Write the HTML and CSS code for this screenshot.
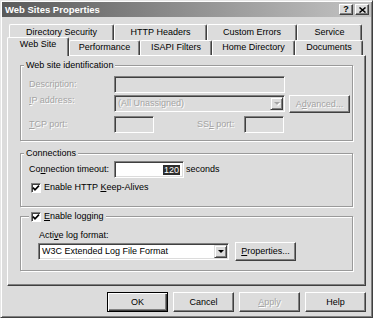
FILE: index.html
```html
<!DOCTYPE html>
<html>
<head>
<meta charset="utf-8">
<link rel="stylesheet" href="styles.css">
</head>
<body>
<div class="window">
  <div class="titlebar">
    <span class="title">Web Sites Properties</span>
    <div class="tbtns">
      <span class="tbtn help">?</span>
      <span class="tbtn"><svg width="7" height="6" viewBox="0 0 7 6"><path d="M0.5 0.5 L6.5 5.5 M6.5 0.5 L0.5 5.5" stroke="#000" stroke-width="1.5" fill="none"/></svg></span>
    </div>
  </div>
  <div class="content">
    <div class="tabs">
      <div class="tabrow back">
        <div class="tab t1">Directory Security</div>
        <div class="tab t2">HTTP Headers</div>
        <div class="tab t3">Custom Errors</div>
        <div class="tab t4">Service</div>
      </div>
      <div class="tabrow front">
        <div class="tab sel f1">Web Site</div>
        <div class="tab f2">Performance</div>
        <div class="tab f3">ISAPI Filters</div>
        <div class="tab f4">Home Directory</div>
        <div class="tab f5">Documents</div>
      </div>
    </div>
    <div class="panel">
      <div class="group g1">
        <div class="gtitle">Web site identification</div>
        <div class="row r1">
          <span class="lbl dis">Description:</span>
          <span class="field dis wide"></span>
        </div>
        <div class="row r2">
          <span class="lbl dis"><u>I</u>P address:</span>
          <span class="field dis wide combo"><span class="ctext distext">(All Unassigned)</span><span class="dd"><span class="arrow disarrow"></span></span></span>
          <span class="btn adv dis">A<u>d</u>vanced...</span>
        </div>
        <div class="row r3">
          <span class="lbl dis"><u>T</u>CP port:</span>
          <span class="field dis port"></span>
          <span class="lbl2 dis">SS<u>L</u> port:</span>
          <span class="field dis port"></span>
        </div>
      </div>
      <div class="group g2">
        <div class="gtitle">Connections</div>
        <div class="row r4">
          <span class="lbl">Co<u>n</u>nection timeout:</span>
          <span class="field tfield"><span class="selected">120</span></span>
          <span class="after">seconds</span>
        </div>
        <div class="row r5">
          <span class="cb"><svg width="8" height="8" viewBox="0 0 8 8"><path d="M1 3.6 L3 5.8 L7 1.6" stroke="#000" stroke-width="1.6" fill="none"/></svg></span>
          <span>Enable HTTP <u>K</u>eep-Alives</span>
        </div>
      </div>
      <div class="group g3">
        <div class="gtitle">
          <span class="cb"><svg width="8" height="8" viewBox="0 0 8 8"><path d="M1 3.6 L3 5.8 L7 1.6" stroke="#000" stroke-width="1.6" fill="none"/></svg></span>
          <span><u>E</u>nable logging</span>
        </div>
        <div class="row r6"><span class="lbl3">Acti<u>v</u>e log format:</span></div>
        <div class="row r7">
          <span class="field combo logfmt"><span class="ctext">W3C Extended Log File Format</span><span class="dd"><span class="arrow"></span></span></span>
          <span class="btn props"><u>P</u>roperties...</span>
        </div>
      </div>
    </div>
    <div class="buttons">
      <span class="btn dbtn default">OK</span>
      <span class="btn dbtn">Cancel</span>
      <span class="btn dbtn dis"><u>A</u>pply</span>
      <span class="btn dbtn">Help</span>
    </div>
  </div>
</div>
</body>
</html>
```
FILE: styles.css
```css
* { box-sizing: border-box; }
html, body { margin: 0; padding: 0; }
body {
  background: #dcdcdc;
  font-family: "Liberation Sans", Arial, sans-serif;
  font-size: 9px;
  color: #000;
}
u { text-decoration: underline; text-underline-offset: 1px; }

.window {
  width: 373px;
  height: 318px;
  border: 1px solid;
  border-color: #e6e6e6 #404040 #404040 #e6e6e6;
  box-shadow: inset 1px 1px #fff, inset -1px -1px #808080;
  padding: 1px;
  background: #dcdcdc;
  overflow: hidden;
}

.titlebar {
  height: 15px;
  background: linear-gradient(to right, #5a5a5a, #c4c4c4);
  display: flex;
  align-items: center;
  justify-content: space-between;
  padding: 0 2px 0 3px;
}
.title { color: #fff; font-weight: bold; font-size: 9.5px; }
.tbtns { display: flex; gap: 2px; }
.tbtn {
  width: 14px;
  height: 11px;
  background: #dcdcdc;
  border: 1px solid;
  border-color: #fff #404040 #404040 #fff;
  box-shadow: inset -1px -1px #808080;
  display: flex;
  align-items: center;
  justify-content: center;
  font-weight: bold;
  font-size: 9px;
  line-height: 1;
}

.content { padding: 0 5px; }
.tabs { margin-top: 7px; }
.tabrow { display: flex; }
.tabrow.back { margin-left: 2px; height: 16px; }
.tabrow.front {
  margin-top: -3px;
  height: 19px;
  margin-bottom: -1px;
  position: relative;
  z-index: 1;
  align-items: flex-start;
}
.tab {
  border: 1px solid;
  border-bottom: none;
  border-color: #fff #404040 #404040 #fff;
  box-shadow: inset -1px 0 #808080;
  border-radius: 2px 2px 0 0;
  background: #dcdcdc;
  text-align: center;
  line-height: 11px;
  white-space: nowrap;
}
.back .tab { height: 16px; padding-top: 2px; }
.front .tab { height: 15px; margin-top: 3px; padding-top: 1px; }
.front .tab.sel { height: 19px; margin-top: 0; padding-top: 1px; }
.t1 { width: 105px; }
.t2 { width: 93px; }
.t3 { width: 90px; }
.t4 { width: 65px; }
.f1 { width: 62px; }
.f2 { width: 71px; }
.f3 { width: 72px; }
.f4 { width: 83px; }
.f5 { width: 68px; }

.panel {
  height: 231px;
  border: 1px solid;
  border-color: #fff #404040 #404040 #fff;
  box-shadow: inset -1px -1px #808080;
  padding: 0 12px;
}

.group {
  border: 1px solid #9a9a9a;
  box-shadow: inset 1px 1px #fff, 1px 1px #fff;
  padding-left: 8px;
}
.g1 { margin-top: 9px; height: 76px; }
.g2 { margin-top: 12px; height: 54px; }
.g3 { margin-top: 9px; height: 55px; padding-left: 17px; }

.gtitle {
  display: flex;
  align-items: center;
  width: max-content;
  height: 11px;
  line-height: 11px;
  margin: -6px 0 0 -5px;
  padding: 0 2px;
  background: #dcdcdc;
}
.g3 .gtitle { margin-left: -9px; }

.row { display: flex; align-items: center; line-height: 11px; }
.lbl { width: 85px; white-space: nowrap; }
.lbl2 { width: 47px; margin-left: 43px; white-space: nowrap; }
.lbl3 { margin-left: 1px; }
.dis { color: #a4a4a4; text-shadow: 1px 1px 0 #fff; }

.field {
  height: 17px;
  border: 1px solid;
  border-color: #808080 #fff #fff #808080;
  box-shadow: inset 1px 1px #404040, inset -1px -1px #dcdcdc;
  background: #fff;
  display: flex;
  align-items: center;
}
.field.dis { background: #dcdcdc; }
.wide { width: 171px; }
.port { width: 40px; }
.combo .ctext { flex: 1; padding-left: 3px; white-space: nowrap; overflow: hidden; }
.distext { color: #a4a4a4; text-shadow: 1px 1px 0 #fff; }
.dd {
  width: 13px;
  height: 13px;
  margin-right: 1px;
  background: #dcdcdc;
  border: 1px solid;
  border-color: #dcdcdc #404040 #404040 #dcdcdc;
  box-shadow: inset 1px 1px #fff, inset -1px -1px #808080;
  display: flex;
  align-items: center;
  justify-content: center;
}
.arrow {
  width: 0;
  height: 0;
  border-left: 3px solid transparent;
  border-right: 3px solid transparent;
  border-top: 3px solid #000;
}
.disarrow { border-top-color: #a4a4a4; filter: drop-shadow(1px 1px 0 #fff); }

.r1 { margin-top: 5px; }
.r2 { margin-top: 2px; align-items: flex-start; }
.r3 { margin-top: 3px; }
.r4 { margin-top: 2px; }
.r5 { margin-top: 4px; height: 11px; margin-left: 2px; }
.r6 { margin-top: 8px; }
.r7 { margin-top: 1px; }

.tfield { width: 70px; justify-content: flex-end; padding-right: 3px; }
.selected { background: #2e2e2e; color: #fff; padding: 0 1px; line-height: 10px; }
.after { margin-left: 2px; }

.cb {
  width: 10px;
  height: 10px;
  background: #fff;
  border: 1px solid;
  border-color: #808080 #fff #fff #808080;
  box-shadow: inset 1px 1px #404040;
  margin-right: 3px;
  display: flex;
  align-items: center;
  justify-content: center;
  flex-shrink: 0;
}

.btn {
  width: 61px;
  height: 19px;
  background: #dcdcdc;
  border: 1px solid;
  border-color: #fff #404040 #404040 #fff;
  box-shadow: inset -1px -1px #808080;
  display: flex;
  align-items: center;
  justify-content: center;
  white-space: nowrap;
}
.adv { margin-left: 4px; height: 18px; }
.logfmt { width: 191px; }
.props { margin-left: 6px; }

.buttons {
  margin-top: 6px;
  display: flex;
  justify-content: flex-end;
  gap: 5px;
}
.dbtn { height: 20px; }
.default {
  border-color: #000;
  box-shadow: inset 1px 1px #fff, inset -1px -1px #404040, inset -2px -2px #808080;
}
```
